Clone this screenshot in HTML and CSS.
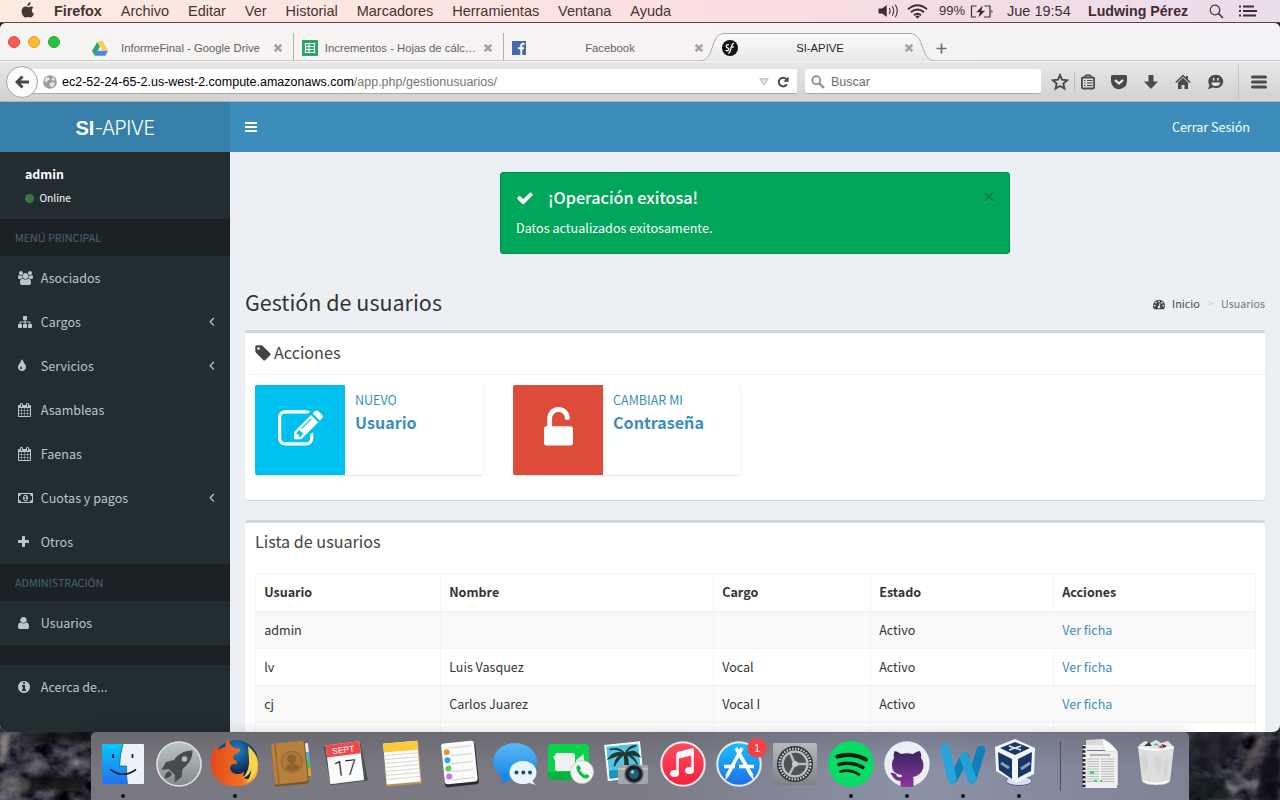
FILE: index.html
```html
<!DOCTYPE html>
<html lang="es">
<head>
<meta charset="utf-8">
<title>SI-APIVE</title>
<link rel="stylesheet" href="styles.css">
</head>
<body>
<svg class="defs" width="0" height="0">
  <defs>
    <symbol id="close-tab" viewBox="0 0 10 10"><path d="M1.8 1.8l6.4 6.4M8.200 1.800l-6.400 6.400" stroke="#a3a1a1" stroke-width="2.600"/><path d="M1 3.200L3.200 1M6.800 1L9 3.200M1 6.800L3.200 9M9 6.800L6.800 9" stroke="#a3a1a1"/></symbol>
    <symbol id="calendar" viewBox="64 0 1664 1792"><path d="M192 1664h288v-288h-288v288zm352 0h320v-288h-320v288zm-352-352h288v-320h-288v320zm352 0h320v-320h-320v320zm-352-384h288v-288h-288v288zm736 736h320v-288h-320v288zm-384-736h320v-288h-320v288zm768 736h288v-288h-288v288zm-384-352h320v-320h-320v320zm-352-864v-288q0-13-9.500-22.500t-22.500-9.500h-64q-13 0-22.500 9.500t-9.500 22.500v288q0 13 9.500 22.500t22.500 9.500h64q13 0 22.500-9.500t9.500-22.500zm736 864h288v-320h-288v320zm-384-384h320v-288h-320v288zm384 0h288v-288h-288v288zm32-480v-288q0-13-9.500-22.500t-22.500-9.500h-64q-13 0-22.500 9.500t-9.500 22.500v288q0 13 9.500 22.500t22.500 9.500h64q13 0 22.500-9.500t9.500-22.500zm384-64v1280q0 52-38 90t-90 38h-1408q-52 0-90-38t-38-90v-1280q0-52 38-90t90-38h128v-96q0-66 47-113t113-47h64q66 0 113 47t47 113v96h384v-96q0-66 47-113t113-47h64q66 0 113 47t47 113v96h128q52 0 90 38t38 90z"/></symbol>
    <symbol id="angle-left" viewBox="0 0 6 10"><path d="M4.900 1L1.200 4.800l3.700 3.800" fill="none" stroke="#b8c7ce" stroke-width="1.300"/></symbol>
  </defs>
</svg>

<header class="menubar">
  <svg class="apple" width="14" height="17" viewBox="0 0 14 17"><path fill="#4a3733" d="M9.600.3c.1 1.100-.3 2-.9 2.700-.6.7-1.500 1.200-2.300 1.100-.1-1 .3-2 .9-2.600C7.900.8 8.900.3 9.600.3zM12.300 5.800c-.9.600-1.500 1.400-1.500 2.700 0 1.500.9 2.500 2.200 3-.5 1.600-1.800 4-3.300 4-1 0-1.400-.6-2.600-.6s-1.600.6-2.600.6C2.700 15.500.6 12.300.6 9.200c0-3 1.900-4.700 3.800-4.700 1.100 0 1.900.7 2.700.7.700 0 1.600-.8 3-.8.900 0 1.700.500 2.200 1.400z"/></svg>
  <b>Firefox</b><span>Archivo</span><span>Editar</span><span>Ver</span><span>Historial</span><span>Marcadores</span><span>Herramientas</span><span>Ventana</span><span>Ayuda</span>
  <div class="status">
    <svg class="st-volume" width="21" height="16" viewBox="0 0 21 16"><path fill="#3f2c35" d="M.5 5.500h3.700L8.700 2v12l-4.500-3.500H.5z"/><path d="M11.300 5q1.600 3 0 6M14.300 3.300q2.800 4.700 0 9.400M17.300 1.700q4 6.300 0 12.600" fill="none" stroke="#3f2c35" stroke-width="1.100"/></svg>
    <svg class="st-wifi" width="21" height="15" viewBox="0 0 21 15"><g fill="none" stroke="#3f2c35" stroke-width="1.900"><path d="M1 5.200q9.500-8 19 0M3.900 8.300q6.600-5.500 13.200 0M6.900 11.200q3.600-2.800 7.200 0"/></g><path d="M8.300 12.300q2.200-1.400 4.400 0l-2.200 2.400z" fill="#3f2c35"/></svg>
    <span class="battery-pct">99%</span>
    <svg class="st-battery" width="24" height="13" viewBox="0 0 24 13"><path d="M6.500 1H1.500v11H6M14.500 1h5.500v11h-6" fill="none" stroke="#3f2c35" stroke-width="1.200"/><path d="M12.700.5L6.300 7.200h3.500L8.400 12.500l6.800-6.800h-3.800z" fill="#3f2c35"/><path d="M21.500 4.500q2 2 0 4z" fill="#3f2c35"/></svg>
    <span class="clock">Jue 19:54</span>
    <b class="user">Ludwing Pérez</b>
    <svg class="st-search" width="15" height="15" viewBox="0 0 15 15"><circle cx="6" cy="6" r="4.800" fill="none" stroke="#3f2c35" stroke-width="1.200"/><path d="M9.500 9.500L14 14" stroke="#3f2c35" stroke-width="1.600"/></svg>
    <svg class="st-list" width="18" height="12" viewBox="0 0 18 12"><path d="M0 1.500h2M4 1.500h11M0 6h2M4 6h14M0 10.500h2M4 10.500h13" stroke="#3f2c35" stroke-width="1.900"/></svg>
  </div>
</header>

<main class="window">
  <div class="tabstrip">
    <svg class="tab-shape" width="1280" height="38" viewBox="0 0 1280 38"><defs><linearGradient id="tabfill" x2="0" y2="1"><stop stop-color="#fbfbfb"/><stop offset="1" stop-color="#e9e8e9"/></linearGradient></defs><path d="M700 38.500C716 38 710 11 722 10.500H911C926 11 920 38 936 38.500z" fill="url(#tabfill)"/><path d="M0 38H699C716 38 709 11 724 10.500H910C926 11 919 38 936 38H1280" fill="none" stroke="#a9a7a7"/></svg>
    <div class="lights"><i class="light red"></i><i class="light amber"></i><i class="light green"></i></div>
    <div class="tab first">
      <svg class="favicon" width="16" height="15" viewBox="0 0 16 15"><path d="M5.300 1L0 10l2.700 4.700L8 5.500z" fill="#2ba465"/><path d="M5.300 0h5.400L16 9.500h-5.300z" fill="#fccd4c"/><path d="M5.300 9.700H16l-2.700 5H2.600z" fill="#4d86e6"/></svg>
      <span class="tab-title">InformeFinal - Google Drive</span>
      <svg class="tab-close" width="10" height="10"><use href="#close-tab"/></svg>
    </div>
    <div class="tab">
      <svg class="favicon" width="16" height="16" viewBox="0 0 16 16"><rect width="16" height="16" rx="1" fill="#27a769"/><path d="M3.500 3.500h9v9h-9zM3.500 6.500h9M3.500 9.500h9M7 3.500v9" fill="none" stroke="#fff" stroke-width="1.200"/></svg>
      <span class="tab-title">Incrementos - Hojas de cálc…</span>
      <svg class="tab-close" width="10" height="10"><use href="#close-tab"/></svg>
    </div>
    <div class="tab">
      <svg class="favicon" width="14" height="14" viewBox="0 0 14 14"><rect width="14" height="14" fill="#4868ab"/><path d="M12.500 2.700h-1.300Q9.300 2.700 9.300 4.600V14M6 7.300h6" fill="none" stroke="#fff" stroke-width="2"/></svg>
      <span class="tab-title">Facebook</span>
      <svg class="tab-close" width="10" height="10"><use href="#close-tab"/></svg>
    </div>
    <div class="tab active">
      <svg class="favicon" width="16" height="16" viewBox="0 0 16 16"><circle cx="8" cy="8" r="8" fill="#111"/><path d="M6.900 4.800C5.600 4.300 4 5.100 4.200 6.400c.3 1.600 2.900 1.400 2.700 3.100-.2 1.500-2.600 1.700-3.200.5M6.200 13.200C9.500 13.500 8.500 3 12 3.400M8.400 7.300l3.500-.4" fill="none" stroke="#fff" stroke-width="1.300"/></svg>
      <span class="tab-title">SI-APIVE</span>
      <svg class="tab-close" width="10" height="10"><use href="#close-tab"/></svg>
    </div>
    <svg class="new-tab" width="11" height="11" viewBox="0 0 11 11"><path d="M5.500.5v10M.5 5.500h10" stroke="#6f6d6d" stroke-width="1.700"/></svg>
  </div>

  <div class="toolbar">
    <div class="back"><svg width="14" height="14" viewBox="0 0 14 14"><path d="M7.500 1.500L2 7l5.500 5.500M2 7h12" fill="none" stroke="#484848" stroke-width="3"/></svg></div>
    <div class="urlbar">
      <svg class="globe" width="14" height="14" viewBox="0 0 14 14"><circle cx="7" cy="7" r="6.800" fill="#9b9b9b"/><path d="M3 2l3 .5 1 2-2.500 1L4 8 1.500 6zM9 2l3 2-1 2-2-1zM6.500 8l4-1 1.500 2-2.500 3.500L7 11z" fill="#e4e4e4"/></svg>
      <span class="url">ec2-52-24-65-2.us-west-2.compute.amazonaws.com<span class="path">/app.php/gestionusuarios/</span></span>
      <svg class="drop" width="10" height="8" viewBox="0 0 10 8"><path d="M.8.8h8.400L5 7z" fill="#e4e4e4" stroke="#b6b6b6"/></svg>
      <svg class="reload" width="12" height="12" viewBox="0 0 12 12"><path d="M9.300 3.200A4.300 4.300 0 1 0 9.800 8.300" fill="none" stroke="#484848" stroke-width="2"/><path d="M11.600.5v5.200H6.400z" fill="#484848"/></svg>
    </div>
    <div class="searchbar">
      <svg width="14" height="14" viewBox="0 0 14 14"><circle cx="5.200" cy="5.200" r="4" fill="none" stroke="#8b8b8b" stroke-width="1.700"/><path d="M8 8l5 5" stroke="#8b8b8b" stroke-width="2.200"/></svg>
      <span>Buscar</span>
    </div>
    <div class="tools">
      <svg width="18" height="18" viewBox="0 0 18 18"><path d="M9 2l2 4.700 5.200.5-3.900 3.400 1.200 5L9 13l-4.500 2.600 1.200-5L1.800 7.200 7 6.700z" fill="none" stroke="#4a4a4a" stroke-width="1.900"/></svg>
      <i class="tool-rule"></i>
      <svg class="clip" width="16" height="18" viewBox="0 0 16 18"><path d="M5 4Q5 2 8 2t3 2" fill="none" stroke="#4a4a4a" stroke-width="1.500"/><rect x="1.900" y="4.500" width="12.200" height="11" rx="1.200" fill="none" stroke="#4a4a4a" stroke-width="1.800"/><path d="M4 7.500h1.500M7 7.500h5.500M4 10h1.500M7 10h5.500M4 12.500h1.500M7 12.500h5.500" stroke="#4a4a4a" stroke-width="1.200"/></svg>
      <svg class="pocket" width="18" height="16" viewBox="0 0 18 16"><path d="M2.500 1h13q1.500 0 1.500 1.500V7q0 4-2.500 6T9 15.200 3.500 13 1 7V2.500Q1 1 2.500 1z" fill="#4a4a4a"/><path d="M5 6l4 3.600L13 6" fill="none" stroke="#ececec" stroke-width="2.200"/></svg>
      <svg class="download" width="16" height="16" viewBox="0 0 16 16"><path d="M5.500 1h5v6.500H15l-7 7.500-7-7.500h4.500z" fill="#4a4a4a"/></svg>
      <svg class="home" width="16" height="16" viewBox="0 0 16 16"><path d="M.8 8.500L8 1.600l7.200 6.900" fill="none" stroke="#4a4a4a" stroke-width="1.500"/><path d="M3 8.500l5-4.800 5 4.800V15H9.500v-4h-3v4H3zM11 2h2v4l-2-2z" fill="#4a4a4a"/></svg>
      <svg class="chat" width="17" height="16" viewBox="0 0 17 16"><path d="M8.800.8c4.300 0 7.400 2.900 7.400 6.600s-3.100 6.700-7.400 6.700c-1 0-2-.2-2.900-.5L1 15.300l1.500-4C1.700 10.200 1.300 8.900 1.300 7.400 1.300 3.700 4.500.8 8.800.8z" fill="#4a4a4a"/><path d="M4.300 8.600h9q-.6 3.500-4.500 3.500T4.300 8.600z" fill="#e5e5e5"/><path d="M6.700 4v2.500M10.900 4v2.500" stroke="#e5e5e5" stroke-width="1.500"/></svg>
      <i class="tool-rule tall"></i>
      <svg class="burger" width="16" height="14" viewBox="0 0 16 14"><path d="M1.500 2h13M1.500 7h13M1.500 12h13" stroke="#4a4a4a" stroke-width="3" stroke-linecap="round"/></svg>
    </div>
  </div>

  <div class="app">
    <aside class="sidebar">
      <div class="logo"><b>SI</b><span>-APIVE</span></div>
      <div class="user-panel"><strong>admin</strong><span class="online"><i></i>Online</span></div>
      <div class="section">MENÚ PRINCIPAL</div>
      <a class="item"><span class="ico"><svg width="15" height="14" viewBox="0 0 1920 1792"><path d="M593 896q-162 5-265 128h-134q-82 0-138-40.500t-56-118.500q0-353 124-353 6 0 43.500 21t97.500 42.500 119 21.500q67 0 133-23-5 37-5 66 0 139 81 256zm1071 637q0 120-73 189.500t-194 69.500h-874q-121 0-194-69.500t-73-189.500q0-53 3.500-103.500t14-109 26.500-108.500 43-97.500 62-81 85.500-53.500 111.500-20q10 0 43 21.500t73 48 107 48 135 21.500 135-21.500 107-48 73-48 43-21.500q61 0 111.500 20t85.500 53.500 62 81 43 97.500 26.500 108.500 14 109 3.500 103.500zm-1024-1277q0 106-75 181t-181 75-181-75-75-181 75-181 181-75 181 75 75 181zm704 384q0 159-112.500 271.500t-271.500 112.500-271.500-112.500-112.500-271.500 112.500-271.500 271.500-112.500 271.500 112.500 112.500 271.500zm576 225q0 78-56 118.500t-138 40.500h-134q-103-123-265-128 81-117 81-256 0-29-5-66 66 23 133 23 59 0 119-21.500t97.500-42.500 43.500-21q124 0 124 353zm-128-609q0 106-75 181t-181 75-181-75-75-181 75-181 181-75 181 75 75 181z"/></svg></span><span class="label">Asociados</span></a>
      <a class="item"><span class="ico"><svg width="14" height="14" viewBox="0 0 1792 1792"><path d="M1792 1248v320q0 40-28 68t-68 28h-320q-40 0-68-28t-28-68v-320q0-40 28-68t68-28h96v-192h-512v192h96q40 0 68 28t28 68v320q0 40-28 68t-68 28h-320q-40 0-68-28t-28-68v-320q0-40 28-68t68-28h96v-192h-512v192h96q40 0 68 28t28 68v320q0 40-28 68t-68 28h-320q-40 0-68-28t-28-68v-320q0-40 28-68t68-28h96v-192q0-52 38-90t90-38h512v-192h-96q-40 0-68-28t-28-68v-320q0-40 28-68t68-28h320q40 0 68 28t28 68v320q0 40-28 68t-68 28h-96v192h512q52 0 90 38t38 90v192h96q40 0 68 28t28 68z"/></svg></span><span class="label">Cargos</span><svg class="caret" width="6" height="10"><use href="#angle-left"/></svg></a>
      <a class="item"><span class="ico"><svg width="8" height="14" viewBox="384 0 1024 1792"><path d="M896 1152q0-36-20-69-1-1-15.500-22.500t-25.500-38-25-44-21-50.500q-4-16-21-16t-21 16q-7 23-21 50.500t-25 44-25.500 38-15.500 22.500q-20 33-20 69 0 53 37.500 90.500t90.500 37.500 90.500-37.500 37.500-90.500zm512-128q0 212-150 362t-362 150-362-150-150-362q0-145 81-275 6-9 62.500-90.500t101-151 99.500-178 83-201.500q9-30 34-47t51-17 51.500 17 33.500 47q28 93 83 201.500t99.500 178 101 151 62.500 90.500q81 127 81 275z"/></svg></span><span class="label">Servicios</span><svg class="caret" width="6" height="10"><use href="#angle-left"/></svg></a>
      <a class="item"><span class="ico"><svg width="13" height="14"><use href="#calendar"/></svg></span><span class="label">Asambleas</span></a>
      <a class="item"><span class="ico"><svg width="13" height="14"><use href="#calendar"/></svg></span><span class="label">Faenas</span></a>
      <a class="item"><span class="ico"><svg width="15" height="14" viewBox="0 0 1920 1792"><path d="M768 1152h384v-96h-128v-448h-114l-148 137 77 80q42-37 55-57h2v288h-128v96zm512-256q0 70-21 142t-59.500 134-101.500 101-138 39-138-39-101.500-101-59.500-134-21-142 21-142 59.500-134 101.500-101 138-39 138 39 101.500 101 59.500 134 21 142zm512 256v-512q-106 0-181-75t-75-181h-1152q0 106-75 181t-181 75v512q106 0 181 75t75 181h1152q0-106 75-181t181-75zm128-832v1152q0 26-19 45t-45 19h-1792q-26 0-45-19t-19-45v-1152q0-26 19-45t45-19h1792q26 0 45 19t19 45z"/></svg></span><span class="label">Cuotas y pagos</span><svg class="caret" width="6" height="10"><use href="#angle-left"/></svg></a>
      <a class="item"><span class="ico"><svg width="11" height="14" viewBox="192 0 1408 1792"><path d="M1600 736v192q0 40-28 68t-68 28h-416v416q0 40-28 68t-68 28h-192q-40 0-68-28t-28-68v-416h-416q-40 0-68-28t-28-68v-192q0-40 28-68t68-28h416v-416q0-40 28-68t68-28h192q40 0 68 28t28 68v416h416q40 0 68 28t28 68z"/></svg></span><span class="label">Otros</span></a>
      <div class="section">ADMINISTRACIÓN</div>
      <a class="item"><span class="ico"><svg width="11" height="14" viewBox="256 0 1280 1792" preserveAspectRatio="none"><path d="M1536 1399q0 109-62.500 187t-150.500 78h-854q-88 0-150.500-78t-62.500-187q0-85 8.500-160.500t31.500-152 58.500-131 94-89 134.500-34.500q131 128 313 128t313-128q76 0 134.500 34.500t94 89 58.500 131 31.500 152 8.500 160.500zm-256-887q0 159-112.500 271.500t-271.500 112.500-271.500-112.500-112.500-271.500 112.500-271.500 271.500-112.500 271.500 112.500 112.500 271.500z"/></svg></span><span class="label">Usuarios</span></a>
      <div class="section gap"></div>
      <a class="item"><span class="ico"><svg width="12" height="14" viewBox="128 0 1536 1792"><path d="M1152 1376v-160q0-14-9-23t-23-9h-96v-512q0-14-9-23t-23-9h-320q-14 0-23 9t-9 23v160q0 14 9 23t23 9h96v320h-96q-14 0-23 9t-9 23v160q0 14 9 23t23 9h448q14 0 23-9t9-23zm-128-896v-160q0-14-9-23t-23-9h-192q-14 0-23 9t-9 23v160q0 14 9 23t23 9h192q14 0 23-9t9-23zm640 416q0 209-103 385.500t-279.500 279.500-385.500 103-385.500-103-279.500-279.500-103-385.500 103-385.500 279.500-279.500 385.500-103 385.500 103 279.500 279.500 103 385.500z"/></svg></span><span class="label">Acerca de...</span></a>
    </aside>

    <section class="main">
      <nav class="navbar">
        <svg width="12" height="14" viewBox="128 0 1536 1792"><path fill="#fff" d="M1664 1344v128q0 26-19 45t-45 19h-1408q-26 0-45-19t-19-45v-128q0-26 19-45t45-19h1408q26 0 45 19t19 45zm0-512v128q0 26-19 45t-45 19h-1408q-26 0-45-19t-19-45v-128q0-26 19-45t45-19h1408q26 0 45 19t19 45zm0-512v128q0 26-19 45t-45 19h-1408q-26 0-45-19t-19-45v-128q0-26 19-45t45-19h1408q26 0 45 19t19 45z"/></svg>
        <a class="label">Cerrar Sesión</a>
      </nav>

      <div class="content">
        <div class="alert">
          <div class="alert-body">
            <h4><svg width="18" height="18" viewBox="0 0 1792 1792"><path fill="#fff" d="M1671 566q0 40-28 68l-724 724-136 136q-28 28-68 28t-68-28l-136-136-362-362q-28-28-28-68t28-68l136-136q28-28 68-28t68 28l294 295 656-657q28-28 68-28t68 28l136 136q28 28 28 68z"/></svg><span class="label">¡Operación exitosa!</span></h4>
            <p>Datos actualizados exitosamente.</p>
          </div>
          <svg class="dismiss" width="10" height="11" viewBox="0 0 9 10"><path d="M.8 1.900l7.400 7.400M8.200 1.900L.8 9.300" stroke="#3dbb81" stroke-width="1.500"/><path d="M.8 1l7.400 7.400M8.200 1L.8 8.400" stroke="#02854a" stroke-width="2"/></svg>
        </div>

        <div class="page-head">
          <h1>Gestión de usuarios</h1>
          <div class="crumbs">
            <svg width="12" height="12" viewBox="0 0 1792 1792"><path fill="#444" fill-rule="evenodd" d="M384 1152q0-53-37.500-90.500t-90.500-37.500-90.500 37.500-37.500 90.500 37.500 90.500 90.500 37.500 90.500-37.500 37.500-90.500zm192-448q0-53-37.500-90.500t-90.500-37.500-90.500 37.500-37.500 90.500 37.500 90.500 90.500 37.500 90.500-37.500 37.500-90.500zm428 481l101-382q6-26-7.500-48.500t-38.500-29.500-48 6.500-30 39.500l-101 382q-60 5-107 43.500t-63 98.500q-20 77 20 146t117 89 146-20 89-117q16-60-6-117t-72-91zm660-33q0-53-37.500-90.500t-90.500-37.500-90.500 37.500-37.500 90.500 37.500 90.500 90.500 37.500 90.500-37.500 37.500-90.500zm-640-640q0-53-37.500-90.500t-90.500-37.500-90.500 37.500-37.500 90.500 37.500 90.500 90.500 37.500 90.500-37.500 37.500-90.500zm448 192q0-53-37.500-90.500t-90.500-37.500-90.500 37.500-37.500 90.500 37.500 90.500 90.500 37.500 90.500-37.500 37.500-90.500zm320 448q0 261-141 483-19 29-54 29h-1402q-35 0-54-29-141-221-141-483 0-182 71-348t191-286 286-191 348-71 348 71 286 191 191 286 71 348z"/></svg>
            <a>Inicio</a><i>&gt;</i><span>Usuarios</span>
          </div>
        </div>

        <div class="box actions">
          <div class="box-head"><svg width="16" height="18" viewBox="128 0 1536 1792"><path fill="#444" d="M576 448q0-53-37.500-90.500t-90.500-37.500-90.500 37.500-37.500 90.500 37.500 90.500 90.500 37.500 90.500-37.500 37.500-90.500zm1067 576q0 53-37 90l-491 492q-39 37-91 37-53 0-90-37l-715-716q-38-37-64.500-101t-26.500-117v-416q0-52 38-90t90-38h416q53 0 117 26.500t102 64.500l715 714q37 39 37 91z"/></svg><span class="title">Acciones</span></div>
          <div class="tiles">
            <a class="tile">
              <span class="tile-icon cyan"><svg width="45" height="45" viewBox="0 0 1792 1792"><path fill="#fff" d="M888 1184l116-116-152-152-116 116v56h96v96h56zm440-720q-16-16-33 1l-350 350q-17 17-1 33t33-1l350-350q17-17 1-33zm80 594v190q0 119-84.500 203.500t-203.500 84.500h-832q-119 0-203.500-84.500t-84.500-203.500v-832q0-119 84.500-203.500t203.500-84.500h832q63 0 117 25 15 7 18 23 3 17-9 29l-49 49q-14 14-32 8-23-6-45-6h-832q-66 0-113 47t-47 113v832q0 66 47 113t113 47h832q66 0 113-47t47-113v-126q0-13 9-22l64-64q15-15 35-7t20 29zm-96-738l288 288-672 672h-288v-288zm444 132l-92 92-288-288 92-92q28-28 68-28t68 28l152 152q28 28 28 68t-28 68z"/></svg></span>
              <span class="tile-text"><span>NUEVO</span><b>Usuario</b></span>
            </a>
            <a class="tile">
              <span class="tile-icon red"><svg width="45" height="45" viewBox="0 0 1792 1792"><path fill="#fff" d="M1376 768q40 0 68 28t28 68v576q0 40-28 68t-68 28h-960q-40 0-68-28t-28-68v-576q0-40 28-68t68-28h32v-320q0-185 131.500-316.500t316.500-131.500 316.500 131.500 131.500 316.500q0 26-19 45t-45 19h-64q-26 0-45-19t-19-45q0-106-75-181t-181-75-181 75-75 181v320h736z"/></svg></span>
              <span class="tile-text"><span>CAMBIAR MI</span><b>Contraseña</b></span>
            </a>
          </div>
        </div>

        <div class="box list">
          <div class="box-head"><span class="title">Lista de usuarios</span></div>
          <table>
            <colgroup><col class="c1"><col class="c2"><col class="c3"><col class="c4"><col class="c5"></colgroup>
            <thead><tr><th>Usuario</th><th>Nombre</th><th>Cargo</th><th>Estado</th><th>Acciones</th></tr></thead>
            <tbody>
              <tr><td>admin</td><td></td><td></td><td>Activo</td><td><a>Ver ficha</a></td></tr>
              <tr><td>lv</td><td>Luis Vasquez</td><td>Vocal</td><td>Activo</td><td><a>Ver ficha</a></td></tr>
              <tr><td>cj</td><td>Carlos Juarez</td><td>Vocal I</td><td>Activo</td><td><a>Ver ficha</a></td></tr>
              <tr><td></td><td></td><td></td><td></td><td></td></tr>
            </tbody>
          </table>
        </div>
      </div>
    </section>
  </div>
</main>

<footer class="desktop">
  <svg class="rock" width="1280" height="76" viewBox="0 0 1280 76">
    <defs>
      <filter id="stone" x="0" y="0" width="100%" height="100%" color-interpolation-filters="sRGB"><feTurbulence type="fractalNoise" baseFrequency=".05 .06" numOctaves="5" seed="8"/><feColorMatrix values=".8 0 0 0 -.2  .8 0 0 0 -.2  .8 0 0 0 -.16  0 0 0 0 1"/></filter>
      <filter id="soft"><feGaussianBlur stdDeviation="2"/></filter>
    </defs>
    <rect width="1280" height="76" fill="#25262d"/>
    <rect width="1280" height="76" filter="url(#stone)"/>
    <g filter="url(#soft)">
      <path d="M0 10l10 0 -3 20-7 10z" fill="#a79c94" opacity=".75"/><path d="M14 6h77l4 14-34-4-26 6z" fill="#111115" opacity=".75"/><path d="M26 56l14-6 28 2 20 4-6 12-38-2z" fill="#0e0f12" opacity=".8"/><path d="M0 56l22-4 10 10-4 6H0z" fill="#97918c" opacity=".5"/><path d="M30 28l16 8 4 14-20-2z" fill="#6c6c74" opacity=".4"/>
      <path d="M1189 6h55l-8 26-26 16-21-6z" fill="#1a1c24" opacity=".75"/><path d="M1262 8l-12 18-14 28 14-8 16-26z" fill="#6e655f" opacity=".7"/><path d="M1262 34l18-22v64h-24z" fill="#101116" opacity=".8"/><path d="M1189 48l30 8 18 20h-48z" fill="#14161c" opacity=".8"/><path d="M1232 66l24-8" stroke="#a08e92" stroke-width="2" opacity=".7"/>
    </g>
  </svg>
  <div class="dock">
    <svg class="app-ico" viewBox="0 0 56 68"><defs><linearGradient id="fb" x2="0" y2="1"><stop stop-color="#05c8f8"/><stop offset="1" stop-color="#2373ee"/></linearGradient></defs><rect x="7" y="12" width="42" height="40" rx="1" fill="#edf1f8"/><path d="M8 12h20q-3 10-3.500 22h7q-.5 8 .9 18H8q-1 0-1-1V13q0-1 1-1z" fill="url(#fb)"/><path d="M28 12q-3 10-3.500 22h7q-.5 8 .9 18" fill="none" stroke="#1d5ca8" stroke-width=".8"/><path d="M18 22v4M37.500 22v4" stroke="#14243b" stroke-width="1.800"/><path d="M15.500 37.500q12.500 9.500 25.500 0" fill="none" stroke="#14243b" stroke-width="1.700"/><circle class="run" cx="28" cy="64" r="2"/></svg>
    <svg class="app-ico" viewBox="0 0 56 68"><defs><linearGradient id="lp" x2="0" y2="1"><stop stop-color="#bcc4c4"/><stop offset="1" stop-color="#838a8a"/></linearGradient></defs><circle cx="28" cy="32" r="22" fill="url(#lp)" stroke="#dde1e1" stroke-width="1.600"/><path d="M41.500 18.500C34 18 27 22 23 28l-8 2-4.500 8 7-1 6.500 6-.5 7.500 7-5.500 1-8C37 33 42 26 41.500 18.500z" fill="#474b4e"/><circle cx="33.500" cy="27" r="2.800" fill="#b2baba"/><path d="M18 39q-4 2-4.500 7.500Q19 46 21 42z" fill="#474b4e"/></svg>
    <svg class="app-ico" viewBox="0 0 56 68"><defs><radialGradient id="fx1" cx=".5" cy=".25"><stop stop-color="#1d87c9"/><stop offset="1" stop-color="#10264f"/></radialGradient><linearGradient id="fx2" x2="1" y2="0"><stop stop-color="#e2491d"/><stop offset=".65" stop-color="#f0701f"/><stop offset="1" stop-color="#fbc735"/></linearGradient></defs><circle cx="29" cy="30" r="22" fill="url(#fx1)"/><path d="M6 20q1-5 3-7l2 5q4-3 8-3-2-4 3-8 0 6 5 9l6 1q1 3-6 6l-1 4q4 1 4 5-6-1-7 4 1 6 8 6 5 0 6-3-2 8 3 8 10-1 9-14 0-9-4-15 7 6 6 18-1 17-22 18.500Q6 53 4 35 3 26 6 20z" fill="url(#fx2)"/><path d="M41 14q10 8 9 20-1 12-10 16 4-6 4-12-2 6-8 8 7-8 6-19z" fill="#fbd24c"/><circle class="run" cx="28" cy="64" r="2"/></svg>
    <svg class="app-ico" viewBox="0 0 56 68"><g transform="rotate(-6 28 32)"><path d="M42 13h5v9h-5z" fill="#e4e4e4"/><path d="M42 22h5v8h-5z" fill="#53b5dc"/><path d="M42 30h5v8h-5z" fill="#48bf62"/><path d="M42 38h5v8h-5z" fill="#e69b35"/><rect x="10" y="10" width="34" height="43" rx="2" fill="#7d5423"/><rect x="10" y="10" width="33" height="41" rx="2" fill="#b6803f"/><path d="M14 10v41" stroke="#93632c" stroke-width="1.200"/><circle cx="29" cy="30" r="10.500" fill="#ae7838" stroke="#976831"/><circle cx="29" cy="27" r="4.300" fill="#8f632f"/><path d="M21.500 36q3-4.500 7.500-4.500t7.500 4.500q-7.500 6.500-15 0z" fill="#8f632f"/></g></svg>
    <svg class="app-ico" viewBox="0 0 56 68"><g transform="rotate(-7 28 32)"><path d="M7 12h37l3 39H9z" fill="#48545a"/><rect x="9" y="11" width="34" height="39" fill="#fbfbfb"/><rect x="9" y="11" width="34" height="12" fill="#ed484b"/><text class="cal-m" x="26" y="20.500">SEPT</text><text class="cal-d" x="26" y="43">17</text></g></svg>
    <svg class="app-ico" viewBox="0 0 56 68"><g transform="rotate(-5 28 32)"><rect x="10" y="10" width="35" height="43" fill="#bd9455"/><rect x="10" y="10" width="34" height="41" fill="#fdfdfb"/><rect x="10" y="10" width="34" height="9" fill="#fbcb3e"/><path d="M10 22h34M10 26h34M10 30h34M10 34h34M10 38h34M10 42h34M10 46h34" stroke="#d8d8d6"/></g></svg>
    <svg class="app-ico" viewBox="0 0 56 68"><g transform="rotate(-6 28 32)"><rect x="12" y="12" width="34" height="42" rx="3" fill="#2c2c31"/><rect x="12" y="10" width="33" height="41" rx="3" fill="#fbfbfb"/><g stroke="#d2d2d2"><path d="M20 15h22M20 23h22M20 31h22M20 39h22M20 47h22"/></g><circle cx="17" cy="19" r="3" fill="#f58f35"/><circle cx="17" cy="27" r="3" fill="#25a9ee"/><circle cx="17" cy="35.500" r="3" fill="#55d05c"/><circle cx="17" cy="43.500" r="3" fill="#c475dc"/></g></svg>
    <svg class="app-ico" viewBox="0 0 56 68"><defs><linearGradient id="ms" x2="0" y2="1"><stop stop-color="#5bb8f1"/><stop offset="1" stop-color="#1385ea"/></linearGradient></defs><ellipse cx="28" cy="29.500" rx="22" ry="18.500" fill="url(#ms)"/><path d="M16 40q0 7-3 11 8-1 13-6z" fill="#1688e9"/><ellipse cx="36" cy="40.500" rx="13.500" ry="11.500" fill="#eaf4fc"/><path d="M39 50l10 3q-4-3-3.500-7z" fill="#eaf4fc"/><g fill="#174b85"><circle cx="29.500" cy="40.500" r="2"/><circle cx="36.300" cy="40.500" r="2"/><circle cx="43" cy="40.500" r="2"/></g></svg>
    <svg class="app-ico" viewBox="0 0 56 68"><rect x="5" y="12" width="41" height="36" rx="4" fill="#08d44b"/><path d="M5 40h41v4q0 4-4 4H9q-4 0-4-4z" fill="#03b53b"/><rect x="12" y="21" width="20" height="18" rx="2.500" fill="#f1f1f1"/><path d="M33 28l8-6v14l-8-2zM10 24h2v5z" fill="#e6e6e6"/><circle cx="39" cy="40" r="11.500" fill="#f3f4f3" stroke="#b8c9bb" stroke-width=".7"/><path d="M34 34q2-2 4 2l-1 2q2 4 5 5l2-1q4 2 1 4-4 2-9-4-4-6-2-8z" fill="#13bd46"/></svg>
    <svg class="app-ico" viewBox="0 0 56 68"><g transform="rotate(-6 26 30)"><rect x="7" y="11" width="36" height="36" fill="#fff"/><rect x="9" y="13" width="32" height="32" fill="#50c4e7"/><path d="M9 37h32v8H9z" fill="#1597bd"/><path d="M26 22q1 13-4 23h4q5-10 2-23zM27 22Q17 17 10 25q9-3 17-3-10 1-12 11 5-8 12-11 10-5 14 4-7-3-14-4 9 2 11 12-3-8-11-12-5-8-15-6 9-1 15 6 4-8 12-7-8 1-12 7z" fill="#21382b" stroke="#21382b" stroke-width="1.400"/></g><rect x="19" y="33" width="30" height="19" rx="1.500" fill="#a3a7a9"/><path d="M19 37h30" stroke="#d6d7d8"/><circle cx="35" cy="42" r="10" fill="#72777c"/><circle cx="35" cy="42" r="8.500" fill="#1d2024"/><circle cx="35" cy="42" r="5" fill="#1f6079"/><circle cx="33.500" cy="40" r="1.700" fill="#8ec8df"/></svg>
    <svg class="app-ico" viewBox="0 0 56 68"><defs><linearGradient id="it" x2="0" y2="1"><stop stop-color="#fb4d62"/><stop offset="1" stop-color="#f8203a"/></linearGradient></defs><circle cx="28" cy="32" r="21.700" fill="url(#it)" stroke="#ececef" stroke-width="2"/><path d="M22.500 41V23l15-4v19" fill="none" stroke="#f7f7f7" stroke-width="2.600"/><path d="M22 20l16.500-4v7L22 27z" fill="#f7f7f7"/><ellipse cx="19.500" cy="41.500" rx="4.500" ry="3.500" fill="#f7f7f7"/><ellipse cx="34.500" cy="38.500" rx="4.500" ry="3.500" fill="#f7f7f7"/></svg>
    <svg class="app-ico" viewBox="0 0 56 68"><defs><linearGradient id="as" x2="0" y2="1"><stop stop-color="#18c2fb"/><stop offset="1" stop-color="#1f6fe9"/></linearGradient></defs><circle cx="28" cy="32" r="21.700" fill="url(#as)" stroke="#e6ebef" stroke-width="2"/><path d="M25 16l16 28M31 16L16 44M13 34.500h11M28 34.500h15" stroke="#fff" stroke-width="3.600"/><path d="M16 44l-1 3M41 44l1 3" stroke="#fff" stroke-width="2"/><circle cx="46" cy="16" r="9.800" fill="#f34245"/><text class="badge" x="46" y="20">1</text></svg>
    <svg class="app-ico" viewBox="0 0 56 68"><defs><linearGradient id="sp" x2="0" y2="1"><stop stop-color="#b4bbbd"/><stop offset="1" stop-color="#7c8285"/></linearGradient></defs><rect x="6" y="11" width="44" height="42" rx="1.500" fill="url(#sp)"/><circle cx="28" cy="32" r="18" fill="#2e3133"/><circle cx="28" cy="32" r="15.500" fill="none" stroke="#c7cacc" stroke-width="2.300" stroke-dasharray="1.600 1.300"/><circle cx="28" cy="32" r="12.500" fill="#4e5254" stroke="#b9bdbf" stroke-width="2.500"/><path d="M28 32l-5-11M28 32h12.500M28 32l-6 11" stroke="#b9bdbf" stroke-width="2.500"/><circle cx="28" cy="32" r="3" fill="#c6c9ca"/></svg>
    <svg class="app-ico" viewBox="0 0 56 68"><circle cx="28" cy="32" r="23" fill="#08dc67"/><path d="M14.500 24.500q14-4.500 28.500 3" fill="none" stroke="#112517" stroke-width="4.200" stroke-linecap="round"/><path d="M16 32.500q12-3.500 24 3" fill="none" stroke="#112517" stroke-width="3.400" stroke-linecap="round"/><path d="M17.500 39.500q10-2.500 18.500 2.800" fill="none" stroke="#112517" stroke-width="2.700" stroke-linecap="round"/><circle class="run" cx="28" cy="64" r="2"/></svg>
    <svg class="app-ico" viewBox="0 0 56 68"><defs><linearGradient id="gh" x2="0" y2="1"><stop stop-color="#39265f"/><stop offset="1" stop-color="#8c3799"/></linearGradient></defs><circle cx="28" cy="32" r="22.700" fill="#ededf5"/><path d="M15 19q3 0 7 3 6-1.500 12 0 4-3 7-3 2 4 1 7 4.500 6 1 13-3 5-9 6 .5 1 .5 3v6.500q-6.500 1-13 0V49q-5 0-7.500-4t-3-4q5-1 7 3 1.500 2 4.500 1l.5-2q-6-.5-8.500-4-3.500-7 .5-13-1-3 .5-7z" fill="url(#gh)"/><circle class="run" cx="28" cy="64" r="2"/></svg>
    <svg class="app-ico" viewBox="0 0 56 68"><g fill="none" stroke-linecap="round" stroke-width="9"><path d="M18 47l12-22" stroke="#0d80bb"/><path d="M10 16l7 31" stroke="#27a5d9"/><path d="M37 47l9-29" stroke="#1080bd"/><path d="M29 25l8 22" stroke="#22a1d5"/></g><circle class="run" cx="28" cy="64" r="2"/></svg>
    <svg class="app-ico" viewBox="0 0 56 68"><ellipse cx="28" cy="49" rx="13" ry="4.500" fill="#d8dff0" stroke="#53608d"/><path d="M24 7l20 9-1 26-18 9L5 39 4 15z" fill="#f1f4fa"/><path d="M24 10l15 6-15 7-15-7zM7 20l14 7v20L8 38zM27 27l14-7-1 19-13 7z" fill="#183863"/><path d="M18 14l12 4M18 18l12-4" stroke="#dce5f2" stroke-width="1.500"/><path d="M10 31l8 5M30 37l9-6" stroke="#8aa0c4" stroke-width="3"/><circle class="run" cx="28" cy="64" r="2"/></svg>
    <i class="dock-rule"></i>
    <svg class="app-ico" viewBox="0 0 56 68"><path d="M14 8l18-1 14 13v33H14z" fill="#d9d9d9"/><path d="M11 13h21l13 6v37H11z" fill="#efefef"/><path d="M30 7q1 10 2 12l14 1Q38 9 30 7z" fill="#fbfbfb" stroke="#c9c9c9" stroke-width=".6"/><path d="M15 18.500h18M18 23h20" stroke="#777" stroke-width="1"/><g stroke="#bdbdbd"><path d="M15 27h12M15 29.500h12M15 32h12M15 34.500h12M15 37h12M15 39.500h12M15 42h12M15 44.500h12M15 47h12M15 49.500h12M29 27h13M29 29.500h13M29 32h13M29 34.500h13M29 37h13M29 39.500h13M29 42h13M29 44.500h13M29 47h13M29 49.500h13"/></g><path d="M18 39h4v3h-4zM22 48h3v2h-3zM28 48h2v2h-2z" fill="#39d967"/><path d="M12 14v42" stroke="#202124" stroke-width="3" stroke-dasharray="2.500 1.800"/></svg>
    <svg class="app-ico" viewBox="0 0 56 68"><path d="M11 13l6-4 5 2 6-3 5 3 7-2 5 5-4 6H14z" fill="#e5e4e4"/><path d="M16 14l5-4 3 4zM34 12l5 2-4 2zM14 17l8 0-4 2z" fill="#333b41"/><path d="M25 13l4-2 2 3z" fill="#4bb3cb"/><path d="M30 15l4-2 1 4z" fill="#d44b2d"/><path d="M10 15q18 6 36 0l-4 34q-2 4-14 4t-14-4z" fill="#dededd"/><path d="M12 24l6-3 3 12-5 10zM26 24l8 2-2 16-5-4zM36 30l5-5-2 20-4-3z" fill="#cfcfce" opacity=".6"/><path d="M10 15q18 6 36 0" fill="none" stroke="#fff" stroke-width="1.600"/><path d="M15 49q13 5 26 0" fill="none" stroke="#fafafa" stroke-width="1.500"/></svg>
  </div>
</footer>
</body>
</html>
```
FILE: styles.css
```css
* { box-sizing: border-box; }
body {
  margin: 0;
  width: 1280px;
  height: 800px;
  overflow: hidden;
  position: relative;
  background: #25262d;
  font-family: "Noto Sans CJK SC", "Noto Sans", sans-serif;
  font-size: 12.55px;
  color: #333;
}
svg { display: block; flex: none; }
.defs { position: absolute; }
h1, h4, p { margin: 0; font-weight: normal; }
.label { padding-bottom: 2px; }

/* menu bar */
.menubar {
  height: 23px;
  display: flex;
  align-items: center;
  gap: 18.9px;
  padding-left: 21px;
  border-bottom: 1px solid #594447;
  background: linear-gradient(90deg, #fdeae1, #fde3e1 40%, #f9dde1 60%, #e9ddea);
  font: 14.5px/22px "Liberation Sans", Arial, sans-serif;
  color: #46332f;
  white-space: nowrap;
}
.apple { margin-top: -1px; }
.menubar b { font-size: 14.4px; }
.status { margin-left: auto; display: flex; align-items: center; color: #3f2c35; padding-right: 23px; }
.st-wifi { margin-left: 8px; }
.battery-pct { font-size: 13px; margin-left: 11px; width: 26px; }
.st-battery { margin-left: 5px; }
.clock { margin-left: 13px; width: 64px; }
.menubar .user { margin-left: 17px; width: 101px; font-size: 14.2px; }
.st-search { margin-left: 20px; }
.st-list { margin-left: 15px; }

/* browser window */
.window {
  height: 709px;
  border-radius: 6px 6px 7px 7px;
  overflow: hidden;
  background: #ecf0f5;
}
.tabstrip {
  height: 39px;
  position: relative;
  display: flex;
  align-items: flex-start;
  padding-top: 10px;
  background: linear-gradient(90deg, #f6f4f2, #f7f3f4 50%, #f3f1f5);
  font: 11.3px/30px "Liberation Sans", Arial, sans-serif;
  color: #636161;
}
.tab-shape { position: absolute; left: 0; top: 0; }
.lights { display: flex; gap: 8px; padding: 3px 0 0 8px; width: 83px; }
.light { width: 12px; height: 12px; border-radius: 50%; border: 1px solid #dd4943; background: #fc5b57; }
.light.amber { background: #fdbc30; border-color: #dfa023; }
.light.green { background: #28c440; border-color: #1ba82c; }
.tab {
  position: relative;
  width: 210px;
  height: 28px;
  display: flex;
  align-items: center;
  padding: 2px 10px 0 8px;
  border-right: 1px solid #b3b0b0;
}
.tab.first { width: 211px; padding-left: 9px; }
.tab:nth-of-type(n+4) { border-right: 0; }
.tab-title { flex: 1; text-align: center; white-space: nowrap; }
.tab.active { color: #262626; }
.tab.active .tab-title { padding-right: 2px; }
.new-tab { position: relative; margin: 10px 0 0 12px; }
.toolbar {
  position: relative;
  height: 40px;
  display: flex;
  align-items: center;
  background: linear-gradient(#e9e8e9, #d2d1d2);
  border-bottom: 1px solid #b5b3b2;
  font: 12.5px/24px "Liberation Sans", Arial, sans-serif;
}
.back {
  width: 32px;
  height: 32px;
  margin-left: 6px;
  display: flex;
  align-items: center;
  justify-content: center;
  border-radius: 50%;
  border: 1px solid #a5a4a4;
  background: #fbfbfb;
  z-index: 1;
}
.urlbar {
  width: 765px;
  height: 25px;
  margin-left: -6px;
  display: flex;
  align-items: center;
  padding: 1px 8px 0 11px;
  background: #fff;
  border-bottom: 1px solid #aaa9a9;
  border-radius: 0 3px 3px 0;
  color: #000;
}
.url { margin-left: 5px; flex: 1; padding-top: 1px; }
.path { color: #757575; }
.reload { margin-left: 8px; }
.searchbar {
  width: 236px;
  height: 25px;
  margin-left: 8px;
  padding: 1px 0 0 6px;
  display: flex;
  align-items: center;
  gap: 6px;
  background: #fff;
  border-bottom: 1px solid #aaa9a9;
  border-radius: 3px;
  color: #6d6d6d;
}
.searchbar span { padding-top: 1px; }
.tools { flex: 1; display: flex; align-items: center; padding-left: 10px; height: 100%; }
.tool-rule { width: 1px; height: 18px; background: #b9b8b8; margin: 0 5px 0 5px; }
.tool-rule.tall { height: 34px; margin: 0 12px 0 14px; background: #c3c2c2; }
.pocket { margin-left: 14px; }
.download { margin-left: 15px; }
.home { margin-left: 16px; }
.chat { margin-left: 16px; }

/* application */
.app { display: flex; height: 630px; }
.sidebar { flex: none; width: 230px; background: #222d32; color: #b8c7ce; }
.logo {
  height: 50px;
  display: flex;
  align-items: center;
  justify-content: center;
  padding-top: 2px;
  background: #367fa9;
  color: #fff;
  font: 20px/48px "Liberation Sans", Arial, sans-serif;
}
.logo span { font-family: Inter, sans-serif; font-weight: 300; letter-spacing: -.55px; font-size: 19.5px; }
.user-panel { height: 67px; padding: 12px 25px 0; color: #fff; line-height: 20px; }
.user-panel strong { display: block; font-size: 12.4px; }
.online { display: flex; align-items: center; gap: 5.500px; font-size: 10.2px; line-height: 27px; }
.online i { width: 9px; height: 9px; border-radius: 50%; background: #3c763d; margin-top: 2px; }
.section { height: 37px; padding-left: 15px; background: #1a2226; color: #4b646f; font-size: 10.75px; line-height: 37px; }
.section.gap { height: 20px; }
.item { height: 44px; padding: 0 15px 0 18px; display: flex; align-items: center; }
.ico { width: 22.800px; fill: #b8c7ce; }
.caret { margin-left: auto; }
.main { flex: 1; min-width: 0; }
.navbar {
  height: 50px;
  display: flex;
  align-items: center;
  justify-content: space-between;
  padding: 0 30px 0 15px;
  background: #3c8dbc;
  color: #fff;
}
.content { padding: 20px 15px 0; }
.alert {
  width: 510px;
  height: 82px;
  margin: 0 auto;
  padding: 15px;
  display: flex;
  justify-content: space-between;
  background: #00a65a;
  border: 1px solid #008d4c;
  border-radius: 3px;
  color: #fff;
}
.alert h4 { display: flex; align-items: center; gap: 14px; height: 20px; font-size: 16.200px; font-weight: 500; }
.alert p { line-height: 20px; margin-top: 10px; }
.alert-body { font-size: 12.6px; }
.dismiss { margin-top: 4px; }
.page-head { display: flex; justify-content: space-between; height: 76px; padding-top: 34px; }
h1 { font-size: 21.500px; line-height: 28px; }
.crumbs { display: flex; align-items: center; height: 30px; font-size: 10.75px; color: #444; }
.crumbs svg { margin-top: 2px; }
.crumbs a { margin-left: 7px; }
.crumbs i { margin: 0 8px; color: #ccc; font-style: normal; font-size: 9.5px; }
.crumbs span { color: #777; }
.box { background: #fff; border-top: 3px solid #d2d6de; border-radius: 3px; box-shadow: 0 1px 1px rgba(0, 0, 0, .1); }
.box-head { height: 42px; padding: 0 10px; display: flex; align-items: center; gap: 3px; font-size: 16.150px; color: #444; }
.box-head svg { margin-top: -2px; }
.title { padding-bottom: 4px; }
.actions { height: 170px; margin-bottom: 20px; }
.actions .box-head { border-bottom: 1px solid #f4f4f4; }
.tiles { display: flex; padding: 10px; gap: 30px; }
.tile { width: 228px; height: 90px; display: flex; border-radius: 2px; box-shadow: 0 1px 1px rgba(0, 0, 0, .1), 1px 0 1px rgba(0, 0, 0, .04); color: #3c8dbc; }
.tile + .tile { width: 227px; }
.tile-icon { width: 90px; display: flex; align-items: center; justify-content: center; border-radius: 2px 0 0 2px; }
.tile-icon svg { margin: -1px 0 0 1px; }
.tile-icon.red svg { margin: -2px 0 0; }
.tile-icon.cyan { background: #00c0ef; }
.tile-icon.red { background: #dd4b39; }
.tile-text { display: flex; flex-direction: column; padding: 5px 10px; line-height: 20px; }
.tile-text b { font-size: 16.1px; line-height: 25px; }
.list { height: 220px; }
.list .box-head { height: 40px; }
table { width: 1000px; margin: 10px; table-layout: fixed; border-collapse: collapse; }
.c1 { width: 185px; } .c2 { width: 273px; } .c3 { width: 157px; } .c4 { width: 183px; } .c5 { width: 202px; }
th, td { height: 37px; padding: 0 8px 0 8.200px; border: 1px solid #f4f4f4; text-align: left; line-height: 20px; }
th { border-bottom-width: 2px; height: 38px; }
tbody tr:nth-child(odd) { background: #f9f9f9; }
td a { color: #3c8dbc; }

/* desktop and dock */
.desktop { position: absolute; left: 0; top: 732px; width: 1280px; height: 68px; }
.rock { position: absolute; left: 0; top: -8px; clip-path: inset(8px 0 0 0); }
.dock {
  position: relative;
  width: 1098px;
  height: 68px;
  margin-left: 91px;
  padding-left: 4px;
  display: flex;
  border-radius: 5px 5px 0 0;
  background: linear-gradient(rgba(60, 60, 64, .25), transparent 55%), linear-gradient(90deg, #79777f, #7b7b85 50%, #8c91a8 75%, #7d8294);
  box-shadow: 0 0 14px rgba(0, 0, 0, .16);
}
.app-ico { width: 56px; height: 68px; }
.run { fill: #10131b; }
.dock-rule { width: 1px; height: 50px; margin: 9px 11px 0 13px; background: #4b4e5b; }
.cal-m { font: 8.5px "Liberation Sans", sans-serif; fill: #fff; text-anchor: middle; }
.cal-d { font: 21px Roboto, "Liberation Sans", sans-serif; font-weight: 300; fill: #222; text-anchor: middle; }
.badge { font: 11px "Liberation Sans", sans-serif; fill: #fff; text-anchor: middle; }
```
